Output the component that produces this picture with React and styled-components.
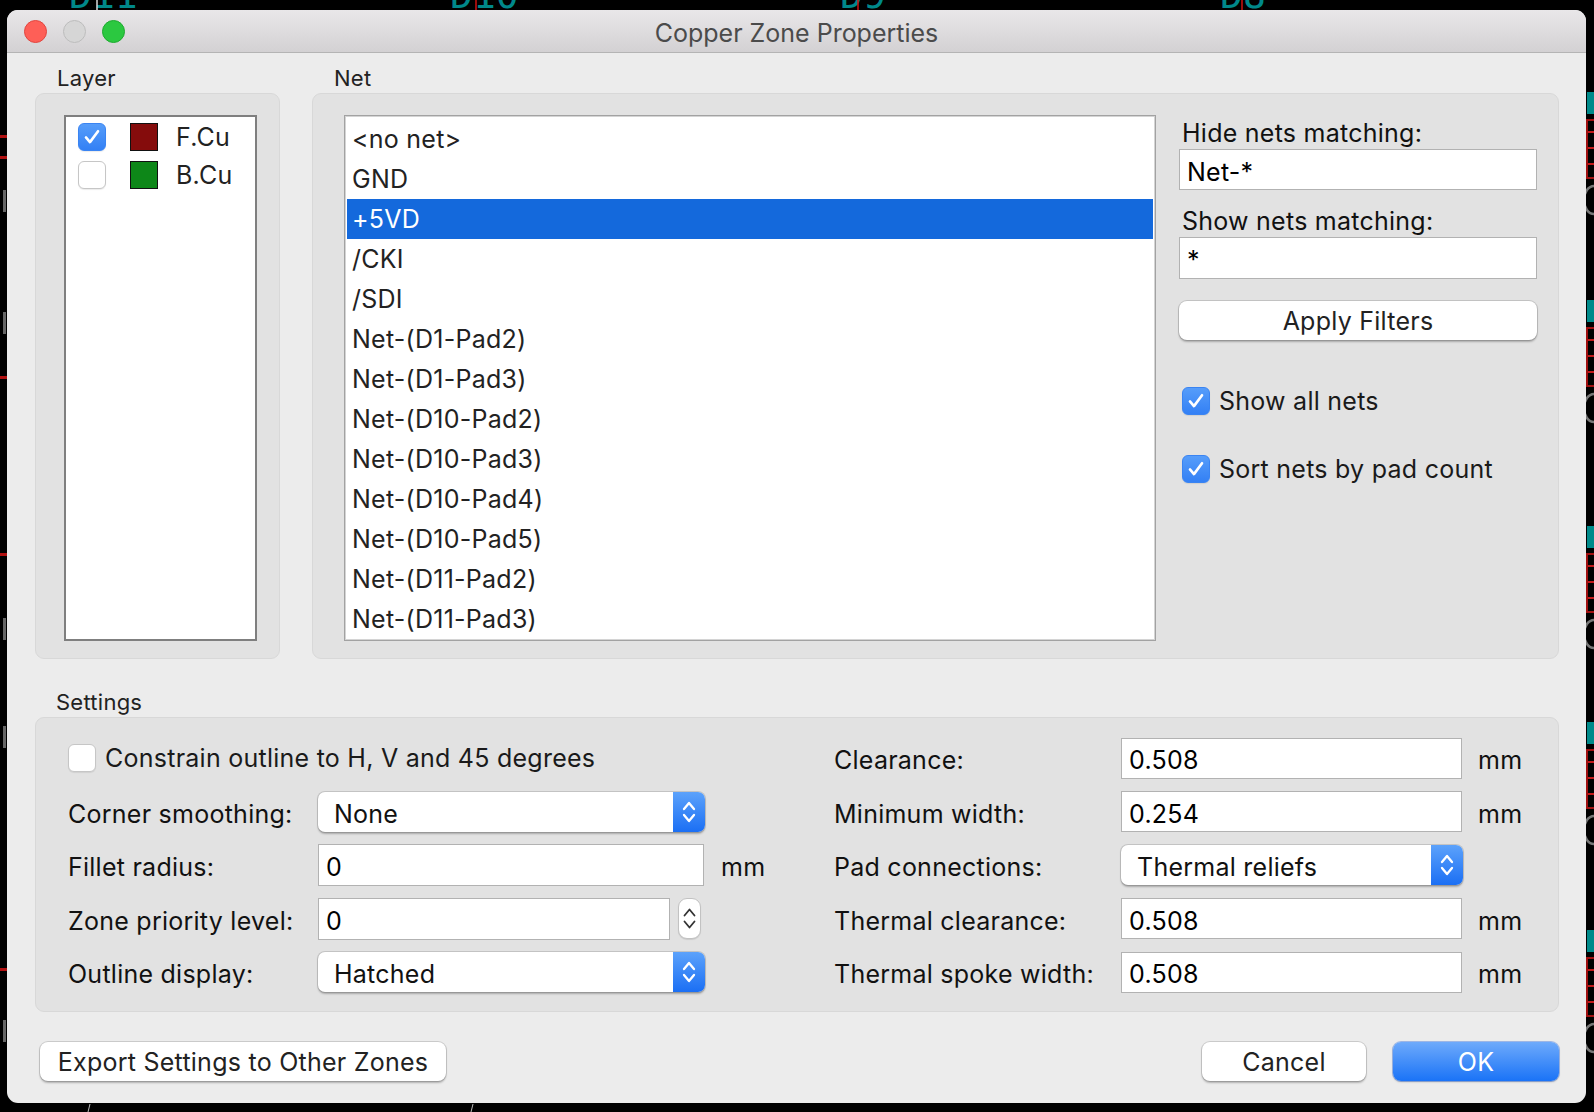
import React from "react";
import styled, { createGlobalStyle } from "styled-components";

const GlobalStyle = createGlobalStyle`
  html, body {
    margin: 0;
    padding: 0;
    background: #000;
  }
  body {
    font-family: Inter, "Liberation Sans", sans-serif;
    -webkit-font-smoothing: antialiased;
  }
  * {
    box-sizing: border-box;
  }
`;

const Screen = styled.div`
  position: relative;
  width: 1594px;
  height: 1112px;
  overflow: hidden;
  background: #000;
  padding: 10px 8px 9px 7px;
`;

const Backdrop = styled.svg`
  position: absolute;
  left: 0;
  top: 0;
  width: 1594px;
  height: 1112px;
`;

const Window = styled.div`
  position: relative;
  z-index: 1;
  height: 100%;
  display: flex;
  flex-direction: column;
  background: #ececec;
  border-radius: 11px;
  overflow: hidden;
  letter-spacing: 0.25px;
`;

const TitleBar = styled.div`
  position: relative;
  height: 43px;
  flex: none;
  display: flex;
  align-items: center;
  justify-content: center;
  padding-top: 3px;
  background: linear-gradient(#e9e7e9, #d3d1d3);
  border-bottom: 1px solid #b4b4b4;
`;

const Lights = styled.div`
  position: absolute;
  left: 17px;
  top: 10px;
  display: flex;
  gap: 16px;
`;

const Light = styled.span`
  width: 23px;
  height: 23px;
  border-radius: 50%;
  background: ${(p) => p.$fill};
  border: 1px solid ${(p) => p.$edge};
`;

const Title = styled.div`
  font-size: 25px;
  color: #4b4b4b;
  letter-spacing: 0;
`;

const Body = styled.div`
  flex: 1;
  display: flex;
  flex-direction: column;
  padding: 12px 27px 22px 28px;
`;

const TopRow = styled.div`
  display: flex;
  gap: 32px;
`;

const Column = styled.div`
  display: flex;
  flex-direction: column;
  width: ${(p) => p.$width}px;
`;

const GroupLabel = styled.div`
  height: 26px;
  line-height: 26px;
  margin-top: ${(p) => p.$gap || 0}px;
  margin-bottom: 2px;
  padding-left: ${(p) => p.$inset || 22}px;
  font-size: 22px;
  color: #222;
`;

const GroupBox = styled.div`
  height: ${(p) => p.$height}px;
  background: #e2e2e2;
  border: 1px solid #d8d8d8;
  border-radius: 9px;
`;

const LayerBox = styled(GroupBox)`
  padding: 21px 0 0 28px;
`;

const LayerList = styled.div`
  width: 193px;
  height: 526px;
  background: #fff;
  border: 2px solid #7f7f7f;
  padding: 1px 0 0 12px;
`;

const LayerRow = styled.div`
  height: 38px;
  display: flex;
  align-items: center;
  font-size: 25px;
  color: #222;
`;

const Swatch = styled.span`
  width: 28px;
  height: 28px;
  margin: 0 18px 0 24px;
  background: ${(p) => p.$color};
  border: 1px solid #111;
`;

const NetBox = styled(GroupBox)`
  display: flex;
  gap: 23px;
  padding: 21px 0 0 31px;
`;

const NetList = styled.div`
  width: 812px;
  height: 526px;
  background: #fff;
  border: 1px solid #a2a2a2;
  box-shadow: inset 0 0 0 1px #d4d4d4;
  padding: 3px 2px 0;
  overflow: hidden;
`;

const NetItem = styled.div`
  height: 40px;
  line-height: 40px;
  padding-left: 5px;
  font-size: 25px;
  color: ${(p) => (p.$selected ? "#fff" : "#222")};
  background: ${(p) => (p.$selected ? "#1469dc" : "transparent")};
`;

const FilterPanel = styled.div`
  width: 358px;
  display: flex;
  flex-direction: column;
  padding-top: 3px;
`;

const FieldLabel = styled.div`
  height: 30px;
  line-height: 30px;
  padding-left: 3px;
  margin-top: ${(p) => p.$gap || 0}px;
  font-size: 25px;
  color: #111;
`;

const TextField = styled.div`
  height: ${(p) => p.$height || 41}px;
  width: ${(p) => (p.$width ? `${p.$width}px` : "100%")};
  margin-top: ${(p) => p.$gap || 0}px;
  display: flex;
  align-items: center;
  padding: 4px 0 0 7px;
  background: #fff;
  border: 1px solid #b2b2b2;
  font-size: 25px;
  color: #000;
`;

const Button = styled.div`
  height: 39px;
  width: ${(p) => (p.$width ? `${p.$width}px` : "100%")};
  margin-top: ${(p) => p.$gap || 0}px;
  display: flex;
  align-items: center;
  justify-content: center;
  padding-top: 1px;
  border-radius: 8px;
  font-size: 25px;
  color: ${(p) => (p.$primary ? "#fff" : "#222")};
  background: ${(p) =>
    p.$primary ? "linear-gradient(#6eaafb, #1a73f7)" : "#fff"};
  box-shadow: ${(p) =>
    p.$primary
      ? "0 0 0 1px rgba(20, 90, 220, 0.35), 0 1px 2px rgba(0, 0, 0, 0.25)"
      : "0 0 0 1px rgba(0, 0, 0, 0.13), 0 1.5px 2px rgba(0, 0, 0, 0.25)"};
`;

const CheckRow = styled.label`
  display: flex;
  align-items: center;
  gap: 9px;
  margin-top: ${(p) => p.$gap || 0}px;
  padding-left: ${(p) => p.$inset || 0}px;
  font-size: 25px;
  color: #1a1a1a;
`;

const Box = styled.span`
  flex: none;
  width: 28px;
  height: 28px;
  border-radius: 6px;
  display: flex;
  align-items: center;
  justify-content: center;
  background: ${(p) =>
    p.$checked ? "linear-gradient(#569dfa, #3380f5)" : "#fff"};
  border: 1px solid ${(p) => (p.$checked ? "#3a84f2" : "#c6c6c6")};
  box-shadow: 0 1px 1px rgba(0, 0, 0, 0.08);
`;

const SettingsBox = styled(GroupBox)`
  display: flex;
  padding: 19px 0 0 32px;
`;

const SettingsGrid = styled.div`
  display: grid;
  grid-template-columns: ${(p) => p.$cols};
  grid-auto-rows: 42px;
  row-gap: 11.5px;
  align-items: center;
`;

const RowLabel = styled.div`
  padding-top: 4px;
  font-size: 25px;
  color: #111;
`;

const Unit = styled(RowLabel)`
  padding-left: 16px;
`;

const FullRow = styled.div`
  grid-column: 1 / -1;
`;

const Select = styled.div`
  height: 40px;
  width: ${(p) => p.$width}px;
  display: flex;
  align-items: center;
  background: #fff;
  border-radius: 7px;
  overflow: hidden;
  box-shadow: 0 0 0 1px rgba(0, 0, 0, 0.12), 0 1.5px 2px rgba(0, 0, 0, 0.25);
  font-size: 25px;
  color: #111;
`;

const SelectText = styled.span`
  flex: 1;
  padding: 4px 0 0 16px;
`;

const SelectArrows = styled.span`
  width: 32px;
  height: 100%;
  display: flex;
  background: linear-gradient(#5ca2fb, #1b6ff4);
`;

const SpinGroup = styled.div`
  display: flex;
  align-items: center;
  gap: 8px;
`;

const Spinner = styled.span`
  width: 23px;
  height: 41px;
  display: flex;
  background: #fff;
  border-radius: 9px;
  border: 1px solid #c2c2c2;
  box-shadow: 0 1px 1px rgba(0, 0, 0, 0.1);
`;

const BottomBar = styled.div`
  display: flex;
  align-items: center;
  gap: 27px;
  margin-top: 30px;
  padding-left: 5px;
`;

const Spacer = styled.div`
  flex: 1;
`;

const Check = () => (
  <svg width="28" height="28" viewBox="0 0 28 28">
    <path
      d="M7.5 14.5 L11.8 19.5 L20.5 7.8"
      fill="none"
      stroke="#fff"
      strokeWidth="2.8"
      strokeLinecap="round"
      strokeLinejoin="round"
    />
  </svg>
);

const UpDown = ({ w, h, color, width }) => (
  <svg width={w} height={h} viewBox={`0 0 ${w} ${h}`}>
    <path
      d={`M${w / 2 - 5} ${h / 2 - 3} L${w / 2} ${h / 2 - 9} L${w / 2 + 5} ${
        h / 2 - 3
      } M${w / 2 - 5} ${h / 2 + 3} L${w / 2} ${h / 2 + 9} L${w / 2 + 5} ${
        h / 2 + 3
      }`}
      fill="none"
      stroke={color}
      strokeWidth={width}
      strokeLinecap="round"
      strokeLinejoin="round"
    />
  </svg>
);

const Checkbox = ({ checked }) => (
  <Box $checked={checked}>{checked && <Check />}</Box>
);

const Dropdown = ({ value, width }) => (
  <Select $width={width}>
    <SelectText>{value}</SelectText>
    <SelectArrows>
      <UpDown w={32} h={40} color="#fff" width={2.3} />
    </SelectArrows>
  </Select>
);

const nets = [
  "<no net>",
  "GND",
  "+5VD",
  "/CKI",
  "/SDI",
  "Net-(D1-Pad2)",
  "Net-(D1-Pad3)",
  "Net-(D10-Pad2)",
  "Net-(D10-Pad3)",
  "Net-(D10-Pad4)",
  "Net-(D10-Pad5)",
  "Net-(D11-Pad2)",
  "Net-(D11-Pad3)",
];

const layers = [
  { name: "F.Cu", color: "#850c0c", checked: true },
  { name: "B.Cu", color: "#0d8718", checked: false },
];

const rightRows = [
  { label: "Clearance:", value: "0.508" },
  { label: "Minimum width:", value: "0.254" },
  { label: "Pad connections:", select: "Thermal reliefs" },
  { label: "Thermal clearance:", value: "0.508" },
  { label: "Thermal spoke width:", value: "0.508" },
];

function renderFootprint(y, key) {
  return (
    <g key={key}>
      <rect x="1587" y={y} width="8" height="22" fill="#008a8a" />
      <rect x="1587" y={y + 28} width="10" height="58" fill="none" stroke="#a01010" strokeWidth="2" />
      <path d={`M1588 ${y + 40} h8 M1588 ${y + 56} h8 M1588 ${y + 72} h8`} stroke="#c01818" strokeWidth="2" />
      <path d={`M1594 ${y + 94} a10 14 0 0 0 0 28`} fill="none" stroke="#777" strokeWidth="2.5" />
    </g>
  );
}

const Background = () => (
  <Backdrop viewBox="0 0 1594 1112">
    {[
      ["D11", 69, 97],
      ["D10", 450, 476],
      ["D9", 840, 858],
      ["D8", 1220, 1242],
    ].map(([t, x, lx]) => (
      <g key={t}>
        <text x={x} y="8" fontSize="38" fill="#00888a" fontFamily="DejaVu Sans Mono, monospace">
          {t}
        </text>
        <line x1={lx} y1="0" x2={lx} y2="12" stroke={t === "D11" ? "#ddd" : "#d01010"} strokeWidth="1.5" />
      </g>
    ))}
    <rect x="0" y="135" width="8" height="3" fill="#b01010" />
    <rect x="0" y="156" width="8" height="3" fill="#b01010" />
    <rect x="0" y="376" width="8" height="3" fill="#b01010" />
    <rect x="0" y="553" width="8" height="3" fill="#b01010" />
    <rect x="0" y="968" width="8" height="3" fill="#b01010" />
    {[190, 312, 618, 726, 1020].map((y) => (
      <rect key={y} x="3" y={y} width="3" height="22" fill="#666" />
    ))}
    <line x1="90" y1="1104" x2="88" y2="1112" stroke="#bbb" strokeWidth="1" />
    <line x1="473" y1="1104" x2="471" y2="1112" stroke="#bbb" strokeWidth="1" />
    {[92, 300, 526, 722, 930].map((y, i) => renderFootprint(y, i))}
  </Backdrop>
);

const App = () => {
  return (
    <Screen>
      <GlobalStyle />
      <Background />
      <Window>
        <TitleBar>
          <Lights>
            <Light $fill="#fe5f57" $edge="#e1453f" />
            <Light $fill="#d6d6d6" $edge="#bcbcbc" />
            <Light $fill="#2bc840" $edge="#1eaa2f" />
          </Lights>
          <Title>Copper Zone Properties</Title>
        </TitleBar>

        <Body>
          <TopRow>
            <Column $width={245}>
              <GroupLabel>Layer</GroupLabel>
              <LayerBox $height={566}>
                <LayerList>
                  {layers.map((layer) => (
                    <LayerRow key={layer.name}>
                      <Checkbox checked={layer.checked} />
                      <Swatch $color={layer.color} />
                      {layer.name}
                    </LayerRow>
                  ))}
                </LayerList>
              </LayerBox>
            </Column>

            <Column $width={1247}>
              <GroupLabel>Net</GroupLabel>
              <NetBox $height={566}>
                <NetList>
                  {nets.map((net) => (
                    <NetItem key={net} $selected={net === "+5VD"}>
                      {net}
                    </NetItem>
                  ))}
                </NetList>
                <FilterPanel>
                  <FieldLabel>Hide nets matching:</FieldLabel>
                  <TextField $gap={1}>Net-*</TextField>
                  <FieldLabel $gap={16}>Show nets matching:</FieldLabel>
                  <TextField $gap={1} $height={42}>*</TextField>
                  <Button $gap={22}>Apply Filters</Button>
                  <CheckRow $gap={46} $inset={3}>
                    <Checkbox checked />
                    Show all nets
                  </CheckRow>
                  <CheckRow $gap={38} $inset={3}>
                    <Checkbox checked />
                    Sort nets by pad count
                  </CheckRow>
                </FilterPanel>
              </NetBox>
            </Column>
          </TopRow>

          <GroupLabel $inset={21} $gap={30}>
            Settings
          </GroupLabel>
          <SettingsBox $height={295}>
            <SettingsGrid $cols="250px 387px 129px">
              <FullRow>
                <CheckRow>
                  <Checkbox />
                  Constrain outline to H, V and 45 degrees
                </CheckRow>
              </FullRow>
              <RowLabel>Corner smoothing:</RowLabel>
              <Dropdown value="None" width={387} />
              <div />
              <RowLabel>Fillet radius:</RowLabel>
              <TextField $width={386} $height={42}>0</TextField>
              <Unit>mm</Unit>
              <RowLabel>Zone priority level:</RowLabel>
              <SpinGroup>
                <TextField $width={352} $height={42}>0</TextField>
                <Spinner>
                  <UpDown w={21} h={39} color="#333" width={1.8} />
                </Spinner>
              </SpinGroup>
              <div />
              <RowLabel>Outline display:</RowLabel>
              <Dropdown value="Hatched" width={387} />
              <div />
            </SettingsGrid>

            <SettingsGrid $cols="287px 341px auto">
              {rightRows.map((row) => (
                <React.Fragment key={row.label}>
                  <RowLabel>{row.label}</RowLabel>
                  {row.select ? (
                    <Dropdown value={row.select} width={342} />
                  ) : (
                    <TextField $width={341}>{row.value}</TextField>
                  )}
                  {row.select ? <div /> : <Unit>mm</Unit>}
                </React.Fragment>
              ))}
            </SettingsGrid>
          </SettingsBox>

          <BottomBar>
            <Button $width={406}>Export Settings to Other Zones</Button>
            <Spacer />
            <Button $width={164}>Cancel</Button>
            <Button $width={166} $primary>
              OK
            </Button>
          </BottomBar>
        </Body>
      </Window>
    </Screen>
  );
};

export default App;
